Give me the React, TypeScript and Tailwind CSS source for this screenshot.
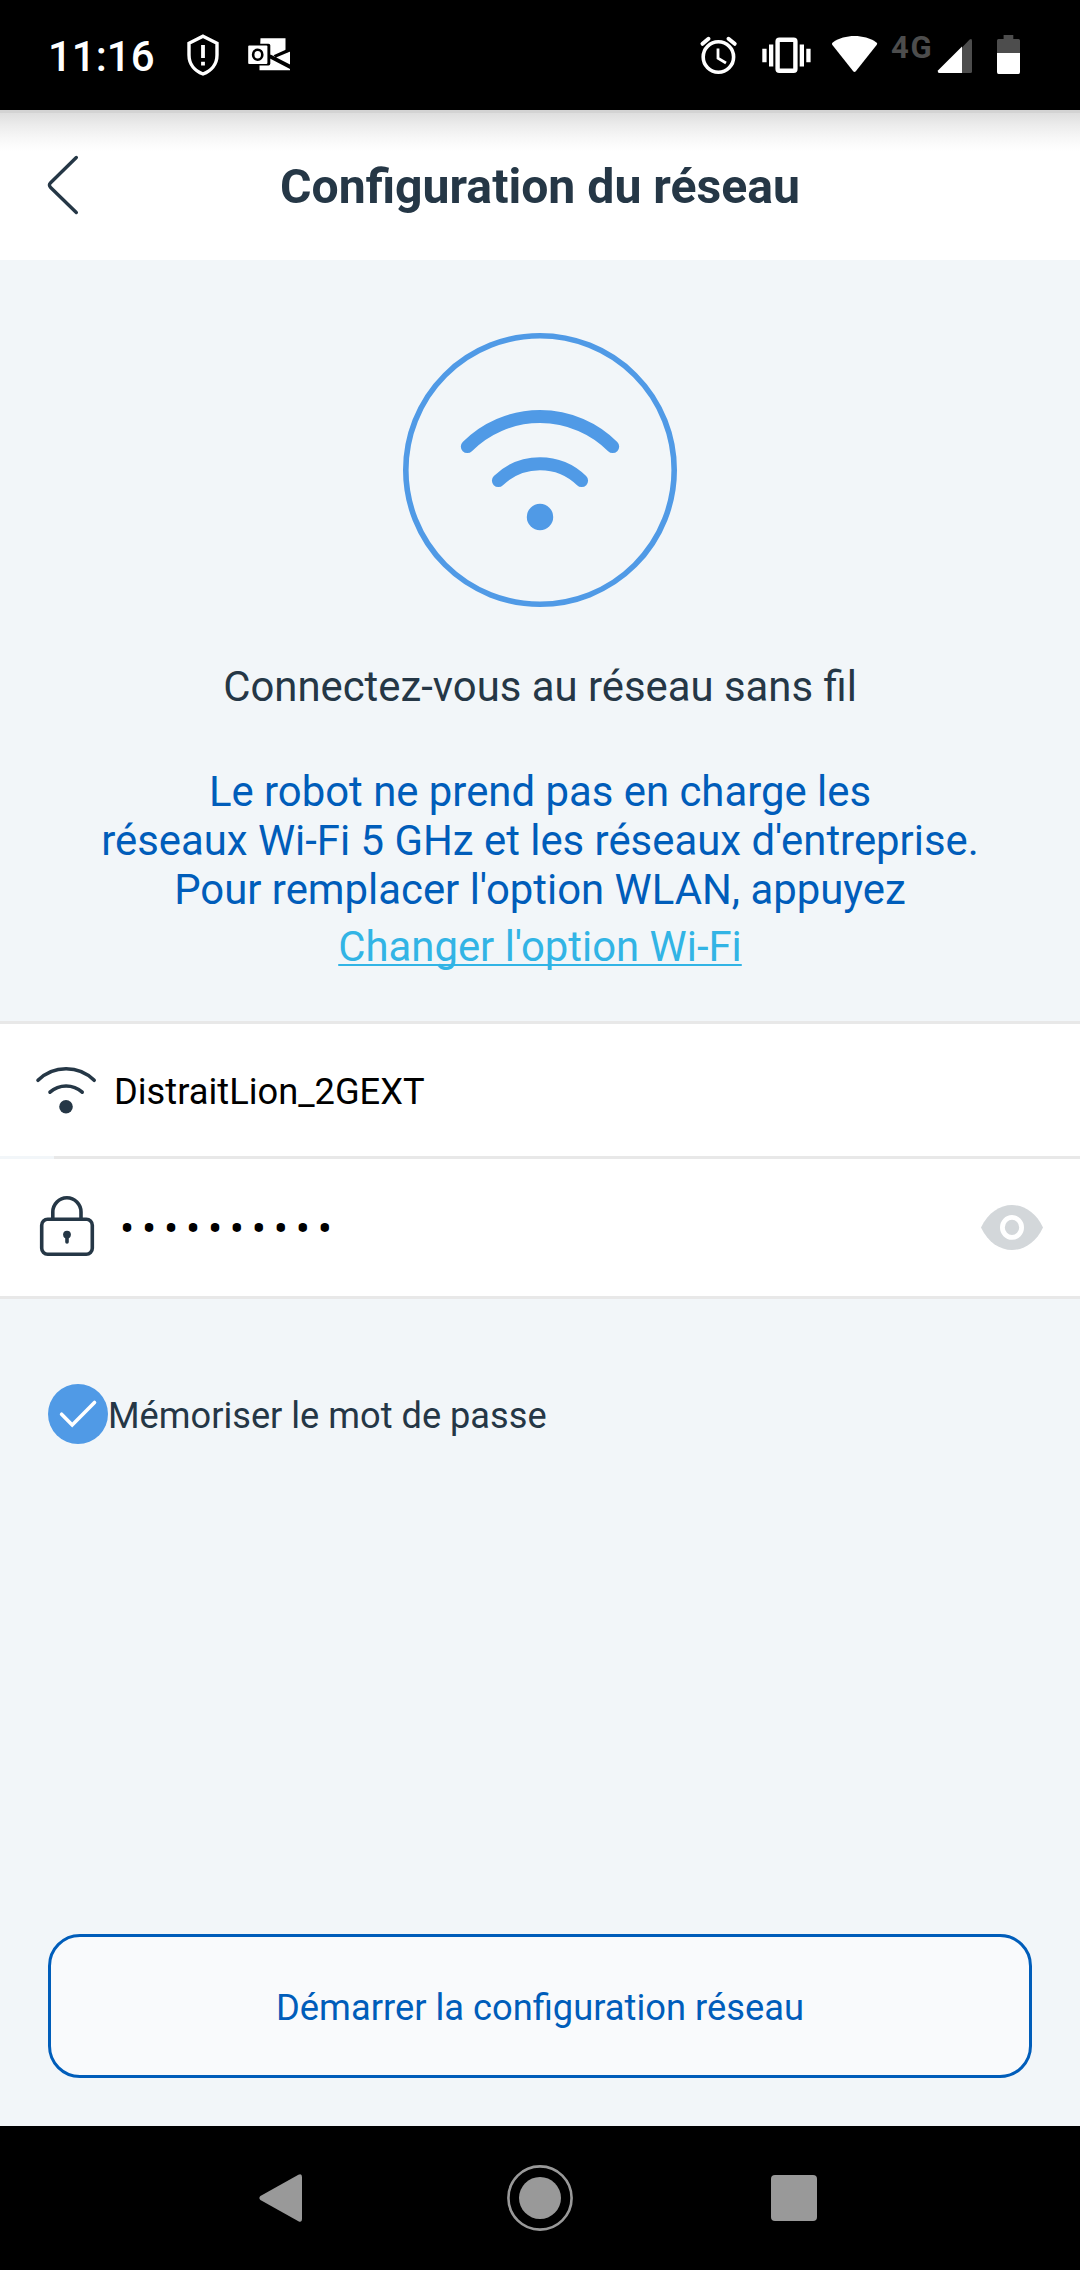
import React from "react";

function StatusBar() {
  return (
    <div className="flex h-[110px] shrink-0 items-start justify-between bg-black text-white">
      <div className="flex items-start">
        <span className="ml-[48px] mt-[32px] w-[112px] text-[42px] leading-[49px] font-medium">11:16</span>
        <svg className="ml-[20px] mt-[28px]" width="46" height="54" viewBox="180 28 46 54" fill="none">
          <path d="M203 36.2 L217 43.2 V55 C217 64.5 211 71 203 74 C195 71 189 64.5 189 55 V43.2 Z" stroke="#fff" strokeWidth="3.4" />
          <path d="M201.1 45h3.8v13h-3.8zM201.1 61.8h3.8v3.6h-3.8z" fill="#fff" />
        </svg>
        <svg className="ml-[18px] mt-[30px]" width="52" height="50" viewBox="244 30 52 50">
          <path d="M260.5 38.3 H285.5 V53 L290 51 V66 L290 70.2 H259.5 V60 Z" fill="#fff" />
          <path d="M270.5 54.5 L290.5 64.8 V69.3 L268 57.5 Z M286.3 38 H292 V50.8 L276 57.6 L273.5 55.2 L286.3 49.4 Z" fill="#000" />
          <path d="M247 43.8 H268.5 Q270.3 43.8 270.3 45.6 V63.5 Q270.3 65.5 268.5 65.5 H247 Z" fill="#000" />
          <rect x="248.2" y="45.5" width="19.2" height="18.5" rx="1" fill="#fff" />
          <ellipse cx="257.7" cy="54.7" rx="4.6" ry="5" fill="none" stroke="#000" strokeWidth="2.6" />
        </svg>
      </div>
      <div className="flex items-start">
        <svg className="mt-[30px]" width="48" height="50" viewBox="694 30 48 50" fill="none" stroke="#fff">
          <circle cx="718.4" cy="57" r="15.2" strokeWidth="3.6" />
          <path d="M718 48.5 V58.3 L726 63" strokeWidth="2.8" />
          <path d="M702.5 43.8 L708.5 38.8 M728.5 38.8 L734.7 43.8" strokeWidth="4" strokeLinecap="round" />
        </svg>
        <svg className="ml-[14px] mt-[30px]" width="60" height="50" viewBox="756 30 60 50" fill="#fff">
          <rect x="777.6" y="39.8" width="17.8" height="31" rx="1.8" fill="none" stroke="#fff" strokeWidth="4.4" />
          <path d="M762.3 48.8h4.3v13.4h-4.3zM769 44.4h4.3v22h-4.3zM799.7 44.4h4.3v22h-4.3zM806.3 48.8h4.3v13.4h-4.3z" />
        </svg>
        <svg className="ml-[12px] mt-[30px]" width="56" height="50" viewBox="828 30 56 50" fill="#fff">
          <path d="M832.2 44.8 Q831.4 43.4 832.8 42.4 C845 34 864 34 876.4 42.4 Q877.8 43.4 876.8 44.8 L855.8 71.2 Q854.5 72.8 853.2 71.2 Z" />
        </svg>
        <span className="ml-[7px] mt-[30px] w-[43px] text-[31px] leading-[35px] font-bold tracking-[1.8px] text-[#4d4d4d]">4G</span>
        <svg className="mt-[30px]" width="44" height="50" viewBox="934 30 44 50">
          <path d="M962 47.5 L969.4 39.8 Q972 37.8 972 41 V71.5 Q972 73 970.5 73 H962 Z" fill="#4d4d4d" />
          <path d="M962 46.5 V73 H939.5 Q937 72.8 938.2 70.3 Z" fill="#fff" />
        </svg>
        <svg className="mt-[30px] mr-[54px]" width="48" height="50" viewBox="978 30 48 50">
          <path d="M997 53 V40.5 Q997 39 998.5 39 H1003.6 V35 H1013.3 V39 H1018.5 Q1020 39 1020 40.5 V53 Z" fill="#4d4d4d" />
          <path d="M997 53 H1020 V72 Q1020 74 1018.5 74 H998.5 Q997 74 997 72 Z" fill="#fff" />
        </svg>
      </div>
    </div>
  );
}

function Header() {
  return (
    <header className="flex h-[150px] shrink-0 flex-col bg-white">
      <div className="h-[3px] bg-[#d3d3d3]" />
      <div className="flex h-[147px] items-start bg-[linear-gradient(to_bottom,#dedede_0px,#ededed_13px,#f8f8f8_26px,#ffffff_38px)]">
        <svg className="ml-[40px] mt-[37px] shrink-0" width="50" height="70" viewBox="40 150 50 70" fill="none">
          <path d="M76.3 157.5 L50.6 182.8 Q48.2 185.1 50.6 187.4 L76.3 212.5" stroke="#253746" strokeWidth="3.4" strokeLinecap="round" />
        </svg>
        <h1 className="mr-[90px] mt-[46px] flex-1 text-center text-[48.15px] leading-[56px] font-bold text-[#253746]">
          Configuration du réseau
        </h1>
      </div>
    </header>
  );
}

function WifiBadge() {
  return (
    <svg className="mt-[50px]" width="320" height="320" viewBox="0 0 320 320" fill="none" stroke="#509ae6">
      <circle cx="160" cy="160" r="134.2" strokeWidth="5.6" />
      <path d="M87.3 136.6 A103 103 0 0 1 232.7 136.6" strokeWidth="13" strokeLinecap="round" />
      <path d="M118.4 170.6 A59.6 59.6 0 0 1 201.6 170.6" strokeWidth="13" strokeLinecap="round" />
      <circle cx="160" cy="207" r="13.2" fill="#509ae6" stroke="none" />
    </svg>
  );
}

function NetworkForm() {
  return (
    <div className="shrink-0 border-y-[3px] border-[#e8e8e8] bg-white">
      <div className="flex h-[132px] items-start">
        <svg className="ml-[30px] mt-[36px]" width="72" height="62" viewBox="30 1060 72 62" fill="none" stroke="#253746">
          <path d="M38 1080.3 A40 40 0 0 1 94.2 1080.3" strokeWidth="3.6" strokeLinecap="round" />
          <path d="M50 1092.2 A24 24 0 0 1 82.2 1092.2" strokeWidth="3.6" strokeLinecap="round" />
          <circle cx="66" cy="1106.8" r="6.8" fill="#253746" stroke="none" />
        </svg>
        <span className="ml-[12px] mt-[47px] text-[36.25px] leading-[42px] text-black">DistraitLion_2GEXT</span>
      </div>
      <div className="flex h-[3px]">
        <div className="w-[54px] bg-[#f2f6f9]" />
        <div className="flex-1 bg-[#e8e8e8]" />
      </div>
      <div className="flex h-[137px] items-start">
        <svg className="ml-[30px] mt-[31px]" width="72" height="72" viewBox="30 1190 72 72" fill="none" stroke="#253746" strokeWidth="3.6">
          <rect x="41.7" y="1219.3" width="50.6" height="35" rx="6" />
          <path d="M52.8 1219 V1212 A14.1 14.2 0 0 1 81 1212 V1219" />
          <circle cx="67" cy="1234.6" r="3.9" fill="#253746" stroke="none" />
          <path d="M67 1235 V1242" strokeLinecap="round" />
        </svg>
        <span className="ml-[18px] mt-[49px] text-[42px] leading-[42px] tracking-[7.8px] text-black">••••••••••</span>
        <svg className="ml-auto mr-[30px] mt-[41px]" width="74" height="56" viewBox="976 1200 74 56">
          <path d="M981 1227.5 C995 1197.5 1029 1197.5 1043 1227.5 C1029 1257.5 995 1257.5 981 1227.5 Z" fill="#d3d7da" />
          <ellipse cx="1012" cy="1227.4" rx="9.6" ry="10" fill="none" stroke="#fff" strokeWidth="4.8" />
        </svg>
      </div>
    </div>
  );
}

function NavBar() {
  return (
    <nav className="flex h-[144px] shrink-0 items-center bg-black">
      <svg className="ml-[255px]" width="52" height="60" viewBox="255 2168 52 60">
        <path d="M260.4 2196 L298.4 2174.7 Q302 2173 302 2177 V2219 Q302 2223 298.4 2221.3 L260.4 2200 Q258.4 2198 260.4 2196 Z" fill="#999" />
      </svg>
      <svg className="ml-[198px]" width="70" height="70" viewBox="505 2163 70 70">
        <circle cx="540" cy="2198" r="31.6" fill="none" stroke="#999" strokeWidth="2.6" />
        <circle cx="540" cy="2198" r="21" fill="#999" />
      </svg>
      <div className="ml-[196px] h-[46px] w-[46px] rounded-[4px] bg-[#999]" />
    </nav>
  );
}

export default function App() {
  return (
    <div className="flex h-[2270px] w-[1080px] flex-col overflow-hidden bg-[#f2f6f9] font-['Roboto',sans-serif] font-normal">
      <StatusBar />
      <Header />
      <main className="flex flex-1 flex-col">
        <section className="flex h-[761px] shrink-0 flex-col items-center text-center text-[41.87px] leading-[49px]">
          <WifiBadge />
          <h2 className="mt-[32px] text-[#253746]">Connectez-vous au réseau sans fil</h2>
          <p className="mt-[56px] text-[#005dba]">
            Le robot ne prend pas en charge les
            <br />
            réseaux Wi-Fi 5 GHz et les réseaux d'entreprise.
            <br />
            Pour remplacer l'option WLAN, appuyez
          </p>
          <a className="mt-[8px] text-[#32b4e5] underline decoration-[2px] underline-offset-[3px] [text-decoration-skip-ink:none]">
            Changer l'option Wi-Fi
          </a>
        </section>
        <NetworkForm />
        <label className="mt-[85px] flex items-start text-[36.2px] leading-[42px] text-[#253746]">
          <svg className="ml-[48px]" width="60" height="60" viewBox="48 1384 60 60">
            <circle cx="78" cy="1414" r="30" fill="#509ae6" />
            <path d="M61.6 1414.2 L72.2 1425 L94.5 1402.5" fill="none" stroke="#fff" strokeWidth="3.6" strokeLinecap="round" />
          </svg>
          <span className="mt-[11px]">Mémoriser le mot de passe</span>
        </label>
        <button className="mx-[48px] mb-[48px] mt-auto h-[144px] rounded-[32px] border-[3px] border-[#005dba] bg-[#f9fafc] pt-[4px] text-[36.3px] leading-[42px] text-[#005dba]">
          Démarrer la configuration réseau
        </button>
      </main>
      <NavBar />
    </div>
  );
}
